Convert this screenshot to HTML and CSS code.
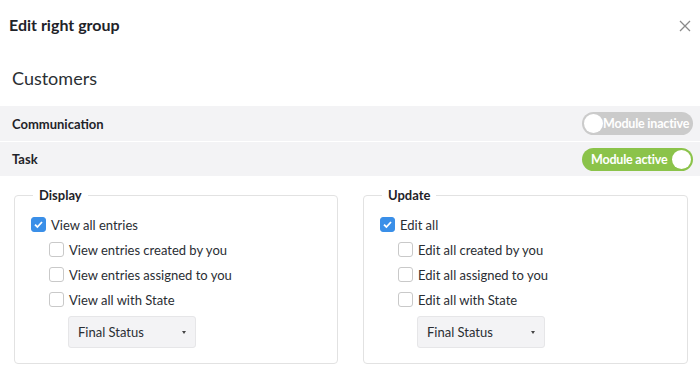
FILE: index.html
```html
<!DOCTYPE html>
<html lang="en">
<head>
    <meta charset="UTF-8">
    <title>Edit right group</title>
    <link rel="stylesheet" href="styles.css">
</head>
<body>
    <div class="modal">
        <div class="modal-header">
            <h1>Edit right group</h1>
            <button class="close-btn" aria-label="Close">
                <svg width="12" height="12" viewBox="0 0 12 12"><path d="M1 1L11 11M11 1L1 11" stroke="#8a8a8a" stroke-width="1.3"/></svg>
            </button>
        </div>

        <h2 class="group-title">Customers</h2>

        <div class="module-list">
            <div class="module-row">
                <span class="module-name">Communication</span>
                <span class="toggle off"><span class="knob"></span>Module inactive</span>
            </div>
            <div class="module-row">
                <span class="module-name">Task</span>
                <span class="toggle on">Module active<span class="knob"></span></span>
            </div>
        </div>

        <div class="rights">
            <fieldset class="right-box">
                <legend>Display</legend>
                <label class="check first"><span class="box checked"></span>View all entries</label>
                <div class="sub">
                    <label class="check"><span class="box"></span>View entries created by you</label>
                    <label class="check"><span class="box"></span>View entries assigned to you</label>
                    <label class="check"><span class="box"></span>View all with State</label>
                    <div class="select">Final Status<span class="caret"></span></div>
                </div>
            </fieldset>
            <fieldset class="right-box">
                <legend>Update</legend>
                <label class="check first"><span class="box checked"></span>Edit all</label>
                <div class="sub">
                    <label class="check"><span class="box"></span>Edit all created by you</label>
                    <label class="check"><span class="box"></span>Edit all assigned to you</label>
                    <label class="check"><span class="box"></span>Edit all with State</label>
                    <div class="select">Final Status<span class="caret"></span></div>
                </div>
            </fieldset>
        </div>
    </div>
</body>
</html>
```

FILE: styles.css
```css
* { margin: 0; padding: 0; box-sizing: border-box; }
body { font-family: 'Lato', 'Liberation Sans', sans-serif; color: #1f2329; background: #fff; width: 700px; height: 378px; overflow: hidden; }

.modal-header { display: flex; justify-content: space-between; align-items: center; height: 48px; padding: 0 9px 0 9px; }
.modal-header h1 { font-size: 16px; font-weight: 700; color: #1f2329; }
.close-btn { background: none; border: none; width: 12px; height: 12px; margin-top: 3px; display: flex; }

.group-title { font-size: 18px; font-weight: 400; color: #2b2f33; padding: 19px 12px 0; height: 58px; }

.module-row { display: flex; justify-content: space-between; align-items: center; height: 35px; padding: 0 7px 0 12px; background: #f3f3f5; border-bottom: 1px solid #fff; }
.module-row:first-child { height: 36px; }
.module-name { font-size: 13px; font-weight: 700; }
.toggle { display: flex; align-items: center; height: 23px; width: 111px; border-radius: 12px; font-size: 12.5px; font-weight: 700; color: #fff; padding: 0 2px; white-space: nowrap; letter-spacing: -0.2px; overflow: hidden; }
.toggle.off { background: #cbcbcb; }
.toggle.on { background: #8bc34a; justify-content: space-between; padding-left: 9px; }
.knob { width: 19px; height: 19px; border-radius: 50%; background: #fff; flex: none; }

.rights { display: grid; grid-template-columns: 324px 325px; gap: 25px; padding: 10px 12px 0 14px; }
.right-box { border: 1px solid #e2e2e2; border-radius: 4px; padding: 0 16px 15px 16px; }
.right-box legend { font-size: 13px; font-weight: 700; padding: 0 6px; margin-left: 2px; }

.check { display: flex; align-items: center; gap: 5px; font-size: 13px; height: 25px; color: #2a2e33; }
.check.first { margin-top: 9px; }
.sub { padding-left: 18px; }
.box { width: 15px; height: 15px; border: 1px solid #c9c9c9; border-radius: 3px; background: #fff; flex: none; }
.box.checked { background: #3a8fe8 url("data:image/svg+xml,%3Csvg xmlns='http://www.w3.org/2000/svg' width='15' height='15'%3E%3Cpath d='M4 7.6l2.4 2.4 4.6-5' fill='none' stroke='white' stroke-width='1.8'/%3E%3C/svg%3E") center no-repeat; border-color: #3a8fe8; }

.select { display: flex; align-items: center; justify-content: space-between; width: 128px; height: 32px; margin: 4px 0 0 19px; padding: 0 9px; background: #f3f3f5; border: 1px solid #e6e6e8; border-radius: 3px; font-size: 13px; color: #2a2e33; }
.caret { width: 0; height: 0; border-left: 2.5px solid transparent; border-right: 2.5px solid transparent; border-top: 3px solid #444; }
```
